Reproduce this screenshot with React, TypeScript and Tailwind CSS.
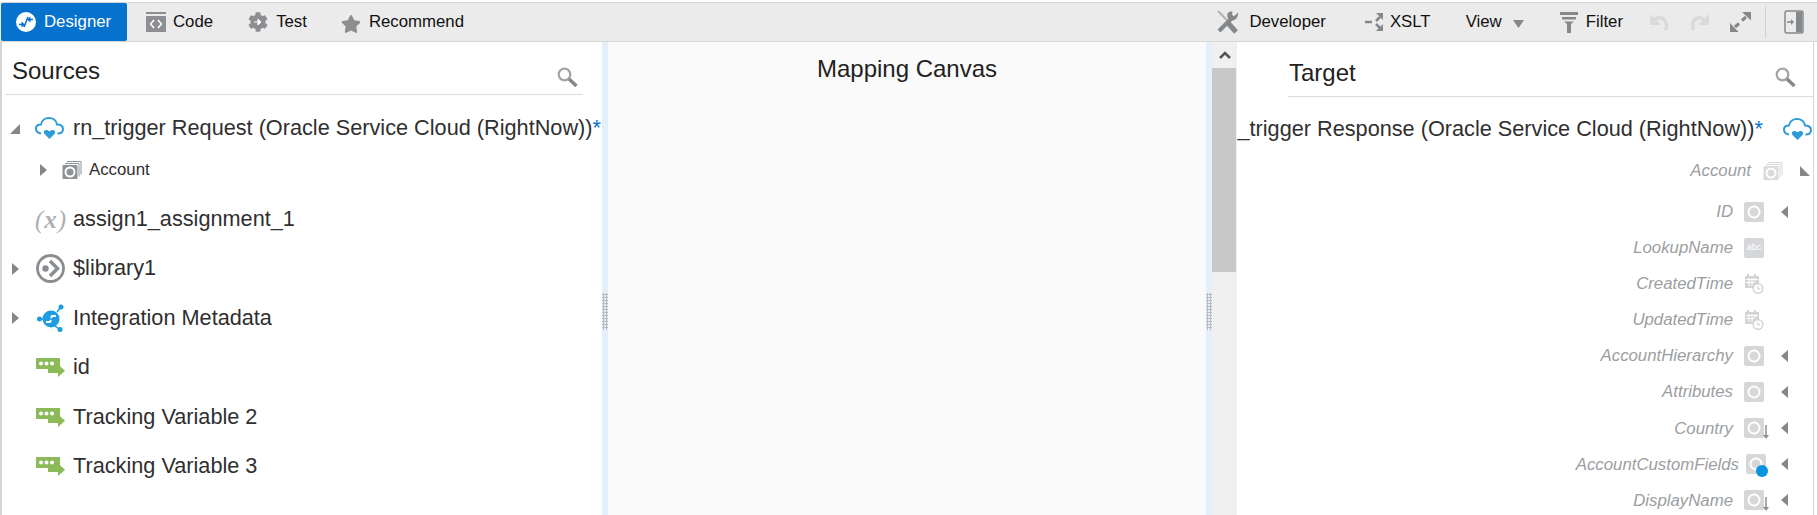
import React from 'react';
import { FaCog, FaStar } from 'react-icons/fa';

const textRows = [
  { name: 'ID', icon: 'ring', caret: true },
  { name: 'LookupName', icon: 'abc', caret: false },
  { name: 'CreatedTime', icon: 'date', caret: false },
  { name: 'UpdatedTime', icon: 'date', caret: false },
  { name: 'AccountHierarchy', icon: 'ring', caret: true },
  { name: 'Attributes', icon: 'ring', caret: true },
  { name: 'Country', icon: 'down', caret: true },
  { name: 'AccountCustomFields', icon: 'dot', caret: true },
  { name: 'DisplayName', icon: 'down', caret: true },
];

const CloudIcon = () => (
  <svg width="29" height="23" viewBox="0 0 29 23" fill="none">
    <path d="M6 16.500C3 16 1 14 1 11.500S3 7.500 6 7.500C6.500 3.500 10 1 14 1s7.500 2.500 8 6.500c3.500 0 6 1.500 6 4.500s-2.500 4.500-5.500 4.500" stroke="#2e9ad8" strokeWidth="2" />
    <path d="M14.500 22l-5-5c-1.500-2 0-4.500 2.500-4 1 .2 2 1 2.500 1.500.5-.5 1.500-1.300 2.500-1.500 2.500-.5 4 2 2.500 4z" fill="#2e9ad8" />
  </svg>
);

const StackIcon = ({ light }: { light?: boolean }) => (
  <svg width="20" height="19" viewBox="0 0 20 19">
    <path d="M5 1.500h14v13M3 3.500h14v13" fill="none" stroke={light ? '#d9dadc' : '#8f9295'} strokeWidth="1" />
    <rect x="0.500" y="5" width="15" height="14" rx="1" fill={light ? '#d9dadc' : '#8f9295'} />
    <circle cx="8" cy="12" r="4.500" fill={light ? '#d9dadc' : '#8f9295'} stroke="#fff" strokeWidth="2" />
  </svg>
);

const RingBox = () => (
  <svg width="20" height="20" viewBox="0 0 20 20">
    <rect width="20" height="20" rx="2" fill="#d6d7d9" />
    <circle cx="10" cy="10" r="5.500" fill="#d6d7d9" stroke="#fff" strokeWidth="2" />
  </svg>
);

const DateIcon = () => (
  <svg width="20" height="22" viewBox="0 0 20 22">
    <path d="M1 3h14v10H9.500v2H1z" fill="#d3d4d6" />
    <path d="M4 1v3M11 1v3" stroke="#d3d4d6" strokeWidth="2" />
    <path d="M2 6.500h12M2 9.500h8M5 5v8M8 5v8M11 5v4" stroke="#fff" strokeWidth="1" />
    <circle cx="14" cy="15.500" r="4.800" fill="#fff" stroke="#d3d4d6" strokeWidth="1.500" />
    <path d="M14 13v2.800h2.500" fill="none" stroke="#d3d4d6" strokeWidth="1.200" />
  </svg>
);

const TargetIcon = ({ kind }: { kind: string }) => {
  if (kind === 'abc') {
    return <span className="flex h-[20px] w-[20px] items-center justify-center rounded-[2px] bg-[#d6d7d9] text-[9px] not-italic text-white">abc</span>;
  }
  if (kind === 'date') return <DateIcon />;
  return (
    <span className="relative block h-[20px] w-[20px]">
      <RingBox />
      {kind === 'down' && (
        <svg className="absolute left-[18px] top-[7px]" width="8" height="15" viewBox="0 0 8 15">
          <path d="M4 0v11" stroke="#8c8e91" strokeWidth="1.500" />
          <path d="M1 10h6l-3 4z" fill="#8c8e91" />
        </svg>
      )}
      {kind === 'dot' && <span className="absolute left-[10px] top-[11px] h-[12px] w-[12px] rounded-full bg-[#0a94e0]" />}
    </span>
  );
};

const Caret = ({ dir }: { dir: 'right' | 'left' | 'se' | 'sw' }) => {
  const points = { right: '0,0 7,6 0,12', left: '7,0 0,6 7,12', se: '10,0 10,10 0,10', sw: '0,0 10,10 0,10' }[dir];
  const size = dir === 'se' || dir === 'sw' ? 10 : 7;
  return (
    <svg width={size} height={dir === 'se' || dir === 'sw' ? 10 : 12} viewBox={`0 0 ${size} ${dir === 'se' || dir === 'sw' ? 10 : 12}`}>
      <polygon points={points} fill="#85888b" />
    </svg>
  );
};

const SearchIcon = () => (
  <svg width="21" height="20" viewBox="0 0 21 20" fill="none">
    <circle cx="7.500" cy="7.500" r="5.800" stroke="#a2a4a7" strokeWidth="2.200" />
    <path d="M12 12l7.500 7" stroke="#85888b" strokeWidth="3.500" />
  </svg>
);

const VarIcon = () => (
  <svg width="29" height="19" viewBox="0 0 29 19">
    <rect x="0" y="0" width="24" height="11" fill="#8cba58" />
    <circle cx="5" cy="5.500" r="2" fill="#fff" />
    <circle cx="10.500" cy="5.500" r="2" fill="#fff" />
    <circle cx="16" cy="5.500" r="2" fill="#fff" />
    <path d="M12 11h12v4H12z" fill="#8cba58" />
    <path d="M22 6.500l7 6.300-7 6.200z" fill="#8cba58" />
  </svg>
);

const LibraryIcon = () => (
  <svg width="29" height="29" viewBox="0 0 29 29" fill="none">
    <circle cx="14.500" cy="14.500" r="13" stroke="#8b8e91" strokeWidth="2.800" />
    <circle cx="9.500" cy="14.500" r="3.200" fill="#8b8e91" />
    <path d="M14 7l7.500 7.500-7.500 7.500" stroke="#8b8e91" strokeWidth="3.500" />
  </svg>
);

const MetaIcon = () => (
  <svg width="27" height="28" viewBox="0 0 27 28" fill="none">
    <circle cx="14" cy="15" r="8.500" fill="#1d9ce0" />
    <path d="M1 15h6M20 8l4-5M18 22l4 3" stroke="#1d9ce0" strokeWidth="1.500" />
    <circle cx="2.500" cy="15" r="2.500" fill="#1d9ce0" />
    <circle cx="24" cy="3" r="2.500" fill="#1d9ce0" />
    <circle cx="23" cy="25.500" r="2.500" fill="#1d9ce0" />
    <path d="M9 18h4l1-2M19 12h-4l-1 2" stroke="#fff" strokeWidth="2" />
  </svg>
);

const DesignerIcon = () => (
  <svg width="20" height="20" viewBox="0 0 20 20">
    <circle cx="10" cy="10" r="10" fill="#fff" />
    <path d="M3 12.500h4M17 7.500h-4M8 15l4-10" fill="none" stroke="#0572ce" strokeWidth="1.600" />
    <path d="M5.500 15.500l3.500-3-3.500-3zM14.500 4.500l-3.500 3 3.500 3z" fill="#0572ce" />
  </svg>
);

const CodeIcon = () => (
  <svg width="20" height="20" viewBox="0 0 20 20">
    <rect y="0" width="20" height="2" fill="#8c8e91" />
    <rect y="4" width="20" height="16" fill="#8c8e91" />
    <path d="M8 8l-3.500 4 3.500 4M12 8l3.500 4-3.500 4" fill="none" stroke="#fff" strokeWidth="1.500" />
  </svg>
);

const TestIcon = () => (
  <span className="relative block h-[20px] w-[20px]">
    <FaCog size={20} color="#8c8e91" />
    <svg className="absolute left-[5px] top-[5px]" width="10" height="10" viewBox="0 0 10 10">
      <circle cx="5" cy="5" r="5" fill="#8c8e91" />
      <path d="M1 5h5M5 2l3 3-3 3z" fill="#fff" stroke="#fff" strokeWidth="1" />
    </svg>
  </span>
);

const ToolsIcon = () => (
  <svg width="23" height="24" viewBox="0 0 23 24" fill="none">
    <path d="M2 1l3 3 14 15" stroke="#b0b2b5" strokeWidth="2" />
    <path d="M12 13l8 9" stroke="#85888b" strokeWidth="5" />
    <path d="M3 21L16 8" stroke="#85888b" strokeWidth="4" />
    <path d="M22 2.500l-3.500 3.500-2.500-1 .5-3c-3-1.500-6 1-5 5 .3 1.500 2 4 5 3.500 4-.5 6-4.500 5.500-8z" fill="#85888b" />
  </svg>
);

const Tab = ({ icon, label, className }: { icon: React.ReactNode; label: string; className: string }) => (
  <div className={`flex items-center ${className}`}>
    {icon}
    <span className="text-[16.800px] text-[#111]">{label}</span>
  </div>
);

export default function App() {
  return (
    <div className="flex h-[515px] w-[1817px] flex-col overflow-hidden bg-white pt-[2px] font-['Liberation_Sans',Arial,sans-serif] text-[#2f2f2f]">
      <div className="flex h-[40px] shrink-0 items-center border-y border-[#d6d6d6] bg-[#ebebeb]">
        <div className="ml-px flex h-[38px] w-[126px] items-center rounded-[2px] bg-[#0572ce] pl-[15px] text-[16.800px] text-white">
          <DesignerIcon />
          <span className="ml-[8px]">Designer</span>
        </div>
        <Tab className="ml-[19px] gap-[7px]" icon={<CodeIcon />} label="Code" />
        <Tab className="ml-[35px] gap-[8px]" icon={<TestIcon />} label="Test" />
        <Tab className="ml-[34px] gap-[8px]" icon={<FaStar size={20} color="#8c8e91" className="mt-[4px]" />} label="Recommend" />
        <div className="ml-auto flex items-center">
          <Tab className="gap-[10px]" icon={<ToolsIcon />} label="Developer" />
          <Tab
            className="ml-[39px] gap-[6px]"
            icon={
              <svg width="19" height="20" viewBox="0 0 19 20" fill="none">
                <path d="M0 10h7" stroke="#85888b" strokeWidth="2.500" />
                <path d="M11 1h7v7z" fill="#85888b" />
                <path d="M15 5l-4 4M11 12l4 4" stroke="#85888b" strokeWidth="2.500" />
                <path d="M11 19h7v-7z" fill="#85888b" />
              </svg>
            }
            label="XSLT"
          />
          <span className="ml-[35px] text-[16.800px] text-[#111]">View</span>
          <svg className="ml-[11px] mt-[3px]" width="11" height="8" viewBox="0 0 11 8">
            <polygon points="0,0 11,0 5.500,8" fill="#85888b" />
          </svg>
          <Tab
            className="ml-[36px] gap-[8px]"
            icon={
              <svg width="18" height="21" viewBox="0 0 18 21">
                <path d="M0 0h18v3H0zM2 5h14v2.500H2zM4 9.500h10l-3 2.500v9H7v-9z" fill="#85888b" />
              </svg>
            }
            label="Filter"
          />
          <svg className="ml-[26px]" width="21" height="20" viewBox="0 0 21 20" fill="none">
            <path d="M1 2v11h11z" fill="#d9dadc" />
            <path d="M6 7.500c2-1.500 4-2 6-1.500 4 .8 7 5 4.500 12" stroke="#d9dadc" strokeWidth="3.500" />
          </svg>
          <svg className="ml-[19px]" width="21" height="20" viewBox="0 0 21 20" fill="none">
            <path d="M20 2v11H9z" fill="#d9dadc" />
            <path d="M15 7.500c-2-1.500-4-2-6-1.500-4 .8-7 5-4.500 12" stroke="#d9dadc" strokeWidth="3.500" />
          </svg>
          <svg className="ml-[20px]" width="21" height="20" viewBox="0 0 21 20">
            <path d="M12 0h9v8.500zM0 11l8.500 9H0z" fill="#85888b" />
            <path d="M16 5l-4 3.500M9 11.500L5 15" stroke="#85888b" strokeWidth="3" />
          </svg>
          <div className="ml-[14px] h-[32px] w-px bg-[#d0d0d0]" />
          <svg className="ml-[18px] mr-[13px]" width="20" height="24" viewBox="0 0 20 24" fill="none">
            <rect x="1" y="1" width="18" height="22" rx="2" stroke="#85888b" strokeWidth="1.500" />
            <rect x="12" y="2" width="6" height="20" fill="#85888b" />
            <path d="M3 12h6" stroke="#85888b" strokeWidth="1.500" />
            <path d="M7 9l3 3-3 3z" fill="#85888b" />
          </svg>
        </div>
      </div>

      <div className="flex min-h-0 flex-1">
        <div className="w-[602px] shrink-0 overflow-hidden border-l-2 border-[#d4d4d4]">
          <div className="ml-[3px] mr-[19px] flex h-[53px] items-center justify-between border-b border-[#d8dde3] pt-[6px]">
            <span className="ml-[7px] text-[24px] text-[#222]">Sources</span>
            <span className="mr-[5px] mt-[12px]"><SearchIcon /></span>
          </div>
          <div className="mt-[1.500px] flex h-[48.250px] items-center pt-[16px] text-[21.700px]">
            <span className="ml-[8px] flex w-[25px]"><Caret dir="se" /></span>
            <CloudIcon />
            <span className="ml-[9px] whitespace-nowrap">rn_trigger Request (Oracle Service Cloud (RightNow))<span className="text-[#0572ce]">*</span></span>
          </div>
          <div className="flex h-[49.500px] items-center">
            <span className="ml-[38px] flex w-[22px]"><Caret dir="right" /></span>
            <StackIcon />
            <span className="ml-[7px] text-[16.800px]">Account</span>
          </div>
          <div className="flex h-[49.500px] items-center text-[21.700px]">
            <span className="ml-[33px] flex w-[31px] justify-center font-['Liberation_Serif',serif] text-[25px] italic leading-none text-[#adafb2]">(<span className="mx-[1px] font-bold">x</span>)</span>
            <span className="ml-[7px]">assign1_assignment_1</span>
          </div>
          <SourceRow caret icon={<LibraryIcon />} label="$library1" />
          <SourceRow caret icon={<MetaIcon />} label="Integration Metadata" />
          <SourceRow icon={<VarIcon />} label="id" />
          <SourceRow icon={<VarIcon />} label="Tracking Variable 2" />
          <SourceRow icon={<VarIcon />} label="Tracking Variable 3" />
        </div>

        <Splitter />
        <div className="w-[598px] shrink-0 bg-[#fafafa] pt-[13px] text-center text-[24px] leading-[28px] text-[#222]">Mapping Canvas</div>
        <Splitter />

        <div className="flex w-[25px] shrink-0 flex-col bg-[#f0f0f0]">
          <div className="flex h-[26px] items-center justify-center">
            <svg width="12" height="8" viewBox="0 0 12 8" fill="none">
              <path d="M1 7l5-5 5 5" stroke="#555" strokeWidth="2.500" />
            </svg>
          </div>
          <div className="h-[204px] w-[24px] bg-[#c8c8c8]" />
        </div>

        <div className="mr-[3px] min-w-0 flex-1 overflow-hidden border-r border-[#d4d4d4]">
          <div className="ml-[51px] flex h-[55px] items-center justify-between border-b border-[#d8dde3] pt-[8px]">
            <span className="ml-px text-[24px] text-[#222]">Target</span>
            <span className="mr-[17px] mt-[8px]"><SearchIcon /></span>
          </div>
          <div className="flex h-[64px] items-center justify-end text-[21.700px]">
            <span className="whitespace-nowrap">rn_trigger Response (Oracle Service Cloud (RightNow))<span className="text-[#0572ce]">*</span></span>
            <span className="ml-[20px] mr-[1px]"><CloudIcon /></span>
          </div>
          <div className="-mt-[1px] flex h-[21px] items-center justify-end text-[16.800px] italic text-[#9c9ea1]">
            <span>Account</span>
            <span className="ml-[12px]"><StackIcon light /></span>
            <span className="ml-[17px] mr-[3px]"><Caret dir="sw" /></span>
          </div>
          <div className="flex flex-col pt-[12.500px]">
            {textRows.map(row => (
              <div key={row.name} className="flex h-[36.100px] items-center justify-end text-[16.800px] italic text-[#9c9ea1]">
                <span>{row.name}</span>
                <span className={row.icon === 'dot' ? 'ml-[7px] -mr-[2px]' : 'ml-[11px]'}><TargetIcon kind={row.icon} /></span>
                <span className="ml-[17px] mr-[25px] flex w-[7px]">{row.caret && <Caret dir="left" />}</span>
              </div>
            ))}
          </div>
        </div>
      </div>
    </div>
  );
}

function SourceRow({ caret, icon, label }: { caret?: boolean; icon: React.ReactNode; label: string }) {
  return (
    <div className="flex h-[49.500px] items-center text-[21.700px]">
      <span className="ml-[10px] flex w-[23px]">{caret && <Caret dir="right" />}</span>
      <span className="flex w-[31px] justify-center">{icon}</span>
      <span className="ml-[7px]">{label}</span>
    </div>
  );
}

function Splitter() {
  return (
    <div className="flex w-[6px] shrink-0 items-start bg-[#e3f0fb] pt-[251px]">
      <div className="h-[37px] w-[6px] bg-[radial-gradient(#bbbbbb_1.200px,transparent_1.200px)] bg-[length:3px_3px]" />
    </div>
  );
}
